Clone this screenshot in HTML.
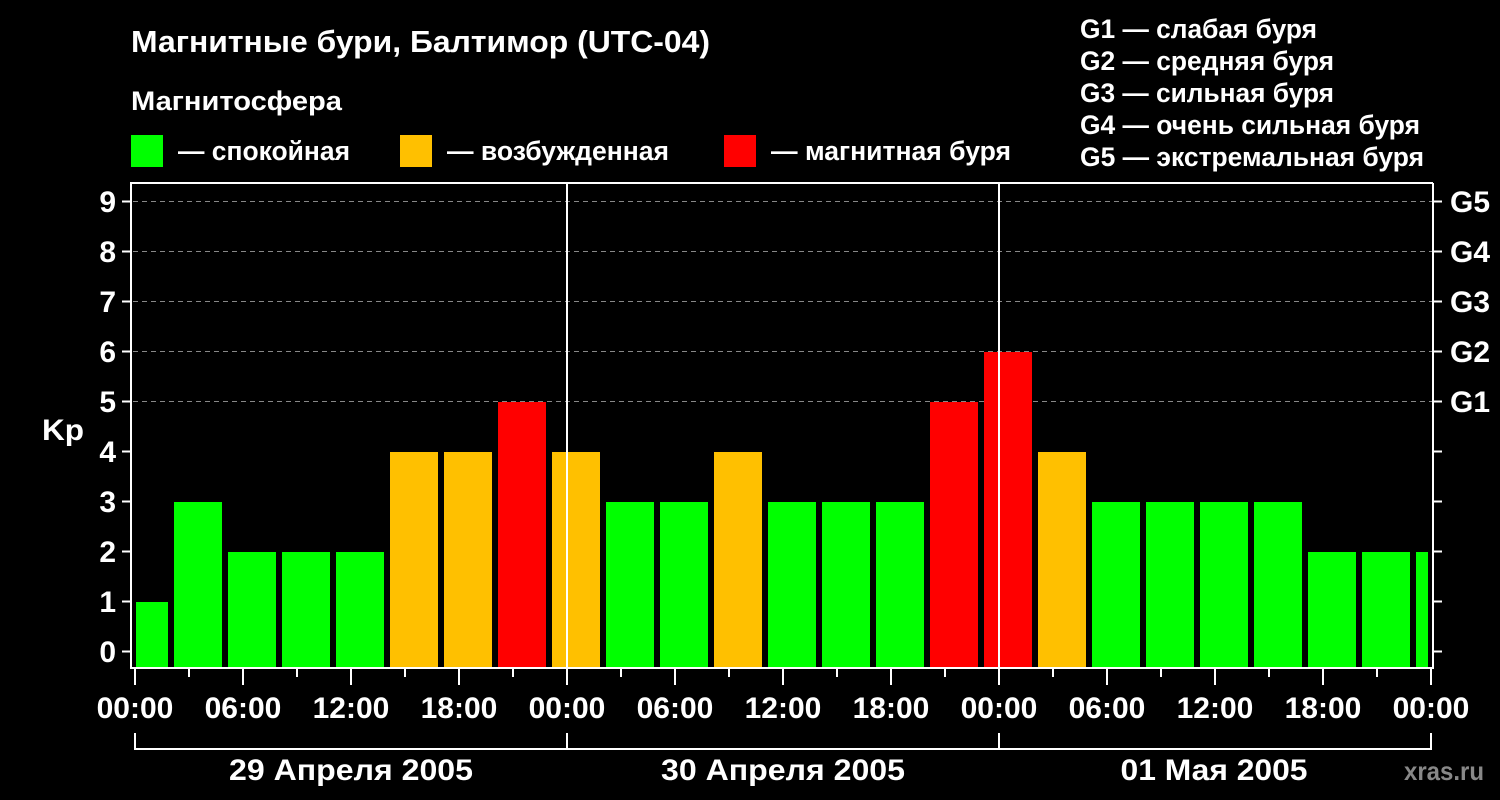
<!DOCTYPE html>
<html><head><meta charset="utf-8"><style>html,body{margin:0;padding:0;background:#000;width:1500px;height:800px;overflow:hidden}</style></head><body>
<svg width="1500" height="800" xmlns="http://www.w3.org/2000/svg" font-family="Liberation Sans, sans-serif" font-weight="bold" fill="#fff">
<rect width="1500" height="800" fill="#000"/>
<text x="131" y="52" font-size="31" textLength="579" lengthAdjust="spacingAndGlyphs">Магнитные бури, Балтимор (UTC-04)</text>
<text x="131" y="110" font-size="27" textLength="211" lengthAdjust="spacingAndGlyphs">Магнитосфера</text>
<rect x="131" y="135" width="32" height="32" fill="#00ff00"/>
<text x="178" y="160" font-size="27" textLength="172" lengthAdjust="spacingAndGlyphs">— спокойная</text>
<rect x="400" y="135" width="32" height="32" fill="#ffc000"/>
<text x="447" y="160" font-size="27" textLength="222" lengthAdjust="spacingAndGlyphs">— возбужденная</text>
<rect x="724" y="135" width="32" height="32" fill="#ff0000"/>
<text x="771" y="160" font-size="27" textLength="240" lengthAdjust="spacingAndGlyphs">— магнитная буря</text>
<g font-size="27">
<text x="1080" y="38" textLength="237" lengthAdjust="spacingAndGlyphs">G1 — слабая буря</text>
<text x="1080" y="70" textLength="254" lengthAdjust="spacingAndGlyphs">G2 — средняя буря</text>
<text x="1080" y="102" textLength="254" lengthAdjust="spacingAndGlyphs">G3 — сильная буря</text>
<text x="1080" y="134" textLength="340" lengthAdjust="spacingAndGlyphs">G4 — очень сильная буря</text>
<text x="1080" y="166" textLength="344" lengthAdjust="spacingAndGlyphs">G5 — экстремальная буря</text>
</g>
<g stroke="#888" stroke-width="1" stroke-dasharray="5,4">
<line x1="133" y1="201.5" x2="1432" y2="201.5"/>
<line x1="133" y1="251.5" x2="1432" y2="251.5"/>
<line x1="133" y1="301.5" x2="1432" y2="301.5"/>
<line x1="133" y1="351.5" x2="1432" y2="351.5"/>
<line x1="133" y1="401.5" x2="1432" y2="401.5"/>
</g>
<g>
<rect x="136" y="602" width="32" height="66" fill="#00ff00"/>
<rect x="174" y="502" width="48" height="166" fill="#00ff00"/>
<rect x="228" y="552" width="48" height="116" fill="#00ff00"/>
<rect x="282" y="552" width="48" height="116" fill="#00ff00"/>
<rect x="336" y="552" width="48" height="116" fill="#00ff00"/>
<rect x="390" y="452" width="48" height="216" fill="#ffc000"/>
<rect x="444" y="452" width="48" height="216" fill="#ffc000"/>
<rect x="498" y="402" width="48" height="266" fill="#ff0000"/>
<rect x="552" y="452" width="48" height="216" fill="#ffc000"/>
<rect x="606" y="502" width="48" height="166" fill="#00ff00"/>
<rect x="660" y="502" width="48" height="166" fill="#00ff00"/>
<rect x="714" y="452" width="48" height="216" fill="#ffc000"/>
<rect x="768" y="502" width="48" height="166" fill="#00ff00"/>
<rect x="822" y="502" width="48" height="166" fill="#00ff00"/>
<rect x="876" y="502" width="48" height="166" fill="#00ff00"/>
<rect x="930" y="402" width="48" height="266" fill="#ff0000"/>
<rect x="984" y="352" width="48" height="316" fill="#ff0000"/>
<rect x="1038" y="452" width="48" height="216" fill="#ffc000"/>
<rect x="1092" y="502" width="48" height="166" fill="#00ff00"/>
<rect x="1146" y="502" width="48" height="166" fill="#00ff00"/>
<rect x="1200" y="502" width="48" height="166" fill="#00ff00"/>
<rect x="1254" y="502" width="48" height="166" fill="#00ff00"/>
<rect x="1308" y="552" width="48" height="116" fill="#00ff00"/>
<rect x="1362" y="552" width="48" height="116" fill="#00ff00"/>
<rect x="1416" y="552" width="12" height="116" fill="#00ff00"/>
</g>
<g stroke="#fff" stroke-width="2" fill="none">
<polyline points="1433,183 131,183 131,668 1433,668 1433,183"/>
<line x1="567" y1="183" x2="567" y2="668"/>
<line x1="999" y1="183" x2="999" y2="668"/>
<path d="M122 201.5H131M122 251.5H131M122 301.5H131M122 351.5H131M122 401.5H131M122 451.5H131M122 501.5H131M122 551.5H131M122 601.5H131M122 651.5H131"/>
<path d="M1433 201.5H1442M1433 251.5H1442M1433 301.5H1442M1433 351.5H1442M1433 401.5H1442M1433 451.5H1442M1433 501.5H1442M1433 551.5H1442M1433 601.5H1442M1433 651.5H1442"/>
<path d="M135 668V685M243 668V685M351 668V685M459 668V685M567 668V685M675 668V685M783 668V685M891 668V685M999 668V685M1107 668V685M1215 668V685M1323 668V685M1431 668V685"/>
<path d="M189 668V677M297 668V677M405 668V677M513 668V677M621 668V677M729 668V677M837 668V677M945 668V677M1053 668V677M1161 668V677M1269 668V677M1377 668V677"/>
<path d="M135 733V749H1431V733M567 733V749M999 733V749"/>
</g>
<g font-size="30" text-anchor="end">
<text x="116" y="212">9</text><text x="116" y="262">8</text><text x="116" y="312">7</text><text x="116" y="362">6</text><text x="116" y="412">5</text><text x="116" y="462">4</text><text x="116" y="512">3</text><text x="116" y="562">2</text><text x="116" y="612">1</text><text x="116" y="662">0</text>
</g>
<text x="42" y="440" font-size="30" textLength="42" lengthAdjust="spacingAndGlyphs">Kp</text>
<g font-size="30">
<text x="1450" y="212">G5</text><text x="1450" y="262">G4</text><text x="1450" y="312">G3</text><text x="1450" y="362">G2</text><text x="1450" y="412">G1</text>
</g>
<g font-size="30" text-anchor="middle">
<text x="135" y="718">00:00</text><text x="243" y="718">06:00</text><text x="351" y="718">12:00</text><text x="459" y="718">18:00</text>
<text x="567" y="718">00:00</text><text x="675" y="718">06:00</text><text x="783" y="718">12:00</text><text x="891" y="718">18:00</text>
<text x="999" y="718">00:00</text><text x="1107" y="718">06:00</text><text x="1215" y="718">12:00</text><text x="1323" y="718">18:00</text><text x="1431" y="718">00:00</text>
<text x="351" y="780" font-size="30" textLength="244" lengthAdjust="spacingAndGlyphs">29 Апреля 2005</text>
<text x="783" y="780" font-size="30" textLength="244" lengthAdjust="spacingAndGlyphs">30 Апреля 2005</text>
<text x="1214" y="780" font-size="30" textLength="187" lengthAdjust="spacingAndGlyphs">01 Мая 2005</text>
</g>
<text x="1404" y="780" font-size="26" fill="#888" textLength="80" lengthAdjust="spacingAndGlyphs">xras.ru</text>
</svg>
</body></html>
